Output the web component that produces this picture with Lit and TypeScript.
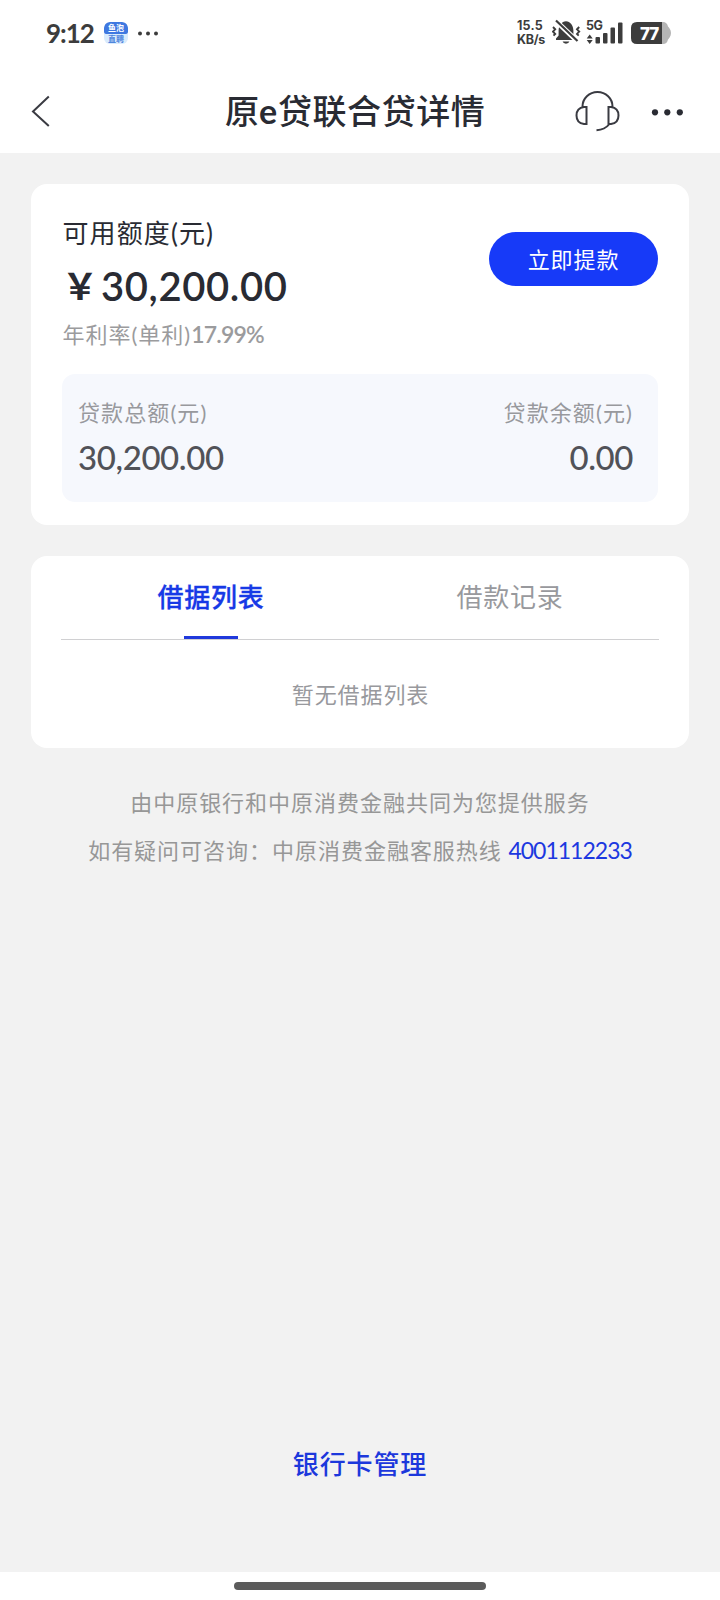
import { LitElement, html, css } from "lit";
import { customElement, state } from "lit/decorators.js";

@customElement("status-bar")
class StatusBar extends LitElement {
  static styles = css`
    :host { display: flex; height: 66px; padding: 0 49px 0 46px; box-sizing: border-box; align-items: center; justify-content: space-between; color: #3c3c3c; }
    .side { display: flex; align-items: center; }
    .time { font-size: 26px; line-height: 30px; font-weight: 700; letter-spacing: -1px; width: 58px; white-space: nowrap; }
    .app { width: 24px; height: 22px; border-radius: 6px; overflow: hidden; font-family: "Noto Sans CJK SC", sans-serif; font-weight: 700; font-size: 8px; line-height: 11px; text-align: center; }
    .top { height: 12px; line-height: 12px; background: #3f78e0; color: #fff; border-radius: 5px 5px 2px 2px; }
    .bottom { height: 10px; line-height: 10px; background: #d9ebfd; color: #4f85dc; }
    .more { margin-left: 9px; display: block; }
    .speed { font: 700 12.5px/14px Inter, sans-serif; width: 35px; white-space: nowrap; }
    .rate { letter-spacing: 0.2px; }
    .unit { letter-spacing: -0.3px; }
    .icons { display: block; }
    .net { font: 700 12.5px Inter, sans-serif; }
    .pct { font: 800 17px Inter, sans-serif; letter-spacing: -1px; }
  `;
  render() {
    return html`
      <div class="side">
        <div class="time">9:12</div>
        <div class="app"><div class="top">鱼泡</div><div class="bottom">直聘</div></div>
        <svg class="more" width="22" height="6" fill="#3c3c3c"><circle cx="3" cy="3.5" r="2" /><circle cx="11" cy="3.5" r="2" /><circle cx="19" cy="3.5" r="2" /></svg>
      </div>
      <div class="side">
        <div class="speed"><div class="rate">15.5</div><div class="unit">KB/s</div></div>
        <svg class="icons" width="119" height="28" viewBox="552 19 119 28" fill="#3c3c3c">
          <path d="M556 40v-1.600l2.600-2.800v-5c0-4.800 3.200-9.300 7.400-9.300s7.400 4.500 7.400 9.300v5l2.600 2.800v1.600zM562.600 41.500h6.800a3.500 2.800 0 0 1-6.800 0z" />
          <path d="M555.500 20.500l21.500 20.500" stroke="#fff" stroke-width="5" />
          <path d="M556 20.500l21.500 20.500" stroke="#3c3c3c" stroke-width="2.200" />
          <path d="M553 27l2.200 2.300-2.200 2.300 2.200 2.300-1.700 1.700M579.200 27l-2.200 2.300 2.200 2.300-2.200 2.300 1.700 1.700" fill="none" stroke="#3c3c3c" stroke-width="1.900" />
          <text class="net" x="586" y="29.500" textLength="17">5G</text>
          <path d="M586.700 38.600l3-4 3 4zM586.700 39.900l3 4 3-4z" />
          <rect x="595.500" y="37" width="4.500" height="6.500" rx="1" /><rect x="603" y="33" width="4.500" height="10.500" rx="1" />
          <rect x="610.500" y="27.500" width="4.500" height="16" rx="1" /><rect x="618" y="22.500" width="4.500" height="21" rx="1" />
          <path d="M660 22h3q4 0 5 4.500c1 1 3 3.500 3 6.500s-2 5.500-3 6.500q-1 4.500-5 4.500h-3z" fill="#b5b5b5" />
          <path d="M637 22h25v22h-25q-6 0-6-6v-10q0-6 6-6z" />
          <text class="pct" x="640" y="39.500" fill="#fff">77</text>
        </svg>
      </div>`;
  }
}

@customElement("nav-header")
class NavHeader extends LitElement {
  static styles = css`
    :host { display: grid; grid-template-columns: 200px 1fr 200px; align-items: center; height: 87px; box-sizing: border-box; color: #292b33; }
    .back { display: block; margin-left: 31px; }
    .title { padding: 3px 0 0 25px; white-space: nowrap; font-size: 34px; line-height: 44px; font-weight: 500; letter-spacing: 0.600px; }
    .latin { font-weight: 700; margin-left: -0.500px; }
    .actions { display: block; margin-left: 53px; }
  `;
  render() {
    return html`
      <svg class="back" width="20" height="34" fill="none" stroke="#3a3b42" stroke-width="2"><path d="M17.800 3.500L2 18.500L17.800 33" /></svg>
      <div class="title">原<span class="latin">e</span>贷联合贷详情</div>
      <svg class="actions" width="115" height="46" viewBox="573 87 115 46" fill="none" stroke="#3a3b42" stroke-width="2">
        <path d="M582.500 107.500V106.500a15 14.500 0 0 1 30 0v1M586.500 107h-2.500q-7.500 1-7.500 8.500t7.500 8.500h2.500zM608.500 107h2.500q7.500 1 7.500 8.500t-7.500 8.500h-2.500zM609 124.500q-4 5-12.500 5.700" />
        <g fill="#292b33" stroke="none"><circle cx="655" cy="112.300" r="3.100" /><circle cx="667.300" cy="112.300" r="3.100" /><circle cx="679.800" cy="112.300" r="3.100" /></g>
      </svg>`;
  }
}

@customElement("credit-card")
class CreditCard extends LitElement {
  static styles = css`
    :host { display: block; box-sizing: border-box; height: 341px; padding: 31px; background: #fff; border-radius: 16px; color: #292b33; }
    .head { display: flex; justify-content: space-between; height: 159px; }
    .label { font-size: 26px; line-height: 36px; letter-spacing: 1.100px; padding-left: 0.500px; }
    .amount { display: flex; font-size: 40px; line-height: 50px; font-weight: 600; margin-top: 10px; letter-spacing: 0.600px; white-space: nowrap; }
    .yen { font-family: "Noto Sans CJK SC", sans-serif; font-weight: 600; font-size: 36px; line-height: 46px; width: 39px; }
    .rate { font-size: 22px; line-height: 30px; margin-top: 8px; color: #9b9b9d; letter-spacing: 1px; padding-left: 0.500px; white-space: nowrap; }
    .percent { font-weight: 600; font-size: 23px; letter-spacing: -0.800px; }
    .draw { appearance: none; border: 0; padding: 0 0 3px; margin-top: 17px; width: 169px; height: 54px; border-radius: 27px; background: #173af8; color: #fff; font: inherit; font-size: 22px; letter-spacing: 0.900px; }
    .totals { display: flex; justify-content: space-between; box-sizing: border-box; height: 128px; padding: 23px 25px 0 16px; background: #f6f8fd; border-radius: 13px; }
    .right { text-align: right; }
    .name { font-size: 22px; line-height: 32px; color: #98999d; letter-spacing: 1.100px; }
    .value { font-size: 33px; line-height: 42px; margin-top: 7px; color: #515258; font-weight: 500; letter-spacing: -0.400px; }
  `;
  render() {
    return html`
      <div class="head">
        <div>
          <div class="label">可用额度(元)</div>
          <div class="amount"><span class="yen">￥</span>30,200.00</div>
          <div class="rate">年利率(单利)<span class="percent">17.99%</span></div>
        </div>
        <button class="draw">立即提款</button>
      </div>
      <div class="totals">
        <div><div class="name">贷款总额(元)</div><div class="value">30,200.00</div></div>
        <div class="right"><div class="name">贷款余额(元)</div><div class="value">0.00</div></div>
      </div>`;
  }
}

@customElement("loan-tabs")
class LoanTabs extends LitElement {
  @state() active = 0;
  static styles = css`
    :host { display: block; box-sizing: border-box; height: 192px; margin-top: 31px; padding: 0 30px; background: #fff; border-radius: 16px; }
    .tabs { display: grid; grid-template-columns: 1fr 1fr; height: 83px; border-bottom: 1px solid #d0d0d2; }
    .tab { display: flex; flex-direction: column; justify-content: space-between; align-items: center; padding: 23px 0 0 1px; font-size: 26px; line-height: 36px; letter-spacing: 0.800px; color: #98999d; cursor: pointer; }
    .tab::after { content: ""; width: 54px; height: 3px; }
    .on { color: #1739e6; font-weight: 500; -webkit-text-stroke: 0.300px #1739e6; }
    .on::after { background: #2039dc; }
    .empty { text-align: center; margin-top: 39px; padding-left: 1px; font-size: 22px; line-height: 32px; letter-spacing: 0.900px; color: #98999d; }
  `;
  render() {
    const tabs = ["借据列表", "借款记录"];
    return html`
      <div class="tabs">
        ${tabs.map((t, i) => html`<div class="tab ${i === this.active ? "on" : ""}" @click=${() => (this.active = i)}>${t}</div>`)}
      </div>
      <div class="empty">暂无${tabs[this.active]}</div>`;
  }
}

@customElement("app-root")
class AppRoot extends LitElement {
  static styles = css`
    :host { display: flex; flex-direction: column; width: 720px; height: 1600px; background: #f2f2f2; font-family: Lato, "Noto Sans CJK SC", sans-serif; overflow: hidden; }
    .top { background: #fff; height: 153px; flex: none; }
    .content { flex: 1; display: flex; flex-direction: column; padding: 31px 31px 0; }
    .service { margin-top: 31px; text-align: center; font-size: 22px; line-height: 48px; letter-spacing: 0.980px; color: #979797; white-space: nowrap; }
    .hotline { margin-top: -1px; }
    .phone { color: #1c38e0; font-size: 23px; letter-spacing: -1px; }
    .cards { margin-top: auto; padding-bottom: 90px; text-align: center; font-size: 26px; line-height: 36px; letter-spacing: 0.900px; font-weight: 500; color: #1c38dc; }
    .home { flex: none; height: 28px; background: #fff; display: flex; justify-content: center; align-items: center; }
    .home::after { content: ""; width: 252px; height: 8px; border-radius: 4px; background: #5b5b5b; }
  `;
  render() {
    return html`
      <div class="top"><status-bar></status-bar><nav-header></nav-header></div>
      <main class="content">
        <credit-card></credit-card>
        <loan-tabs></loan-tabs>
        <div class="service">
          <div>由中原银行和中原消费金融共同为您提供服务</div>
          <div class="hotline">如有疑问可咨询：中原消费金融客服热线 <span class="phone">4001112233</span></div>
        </div>
        <div class="cards">银行卡管理</div>
      </main>
      <div class="home"></div>`;
  }
}
